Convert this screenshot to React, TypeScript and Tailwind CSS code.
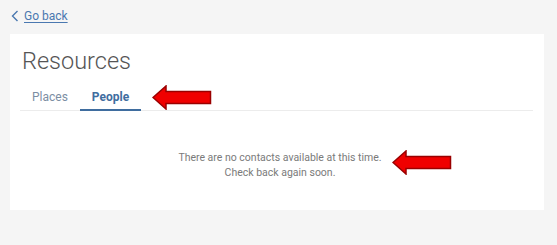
import React from 'react';

function RedArrow({ className }: { className: string }) {
  return (
    <svg className={className} width="60" height="25" viewBox="0 0 60 25">
      <polygon
        points="1,12.5 14,1 14,6.5 58.5,6.5 58.5,18.5 14,18.5 14,24"
        fill="#f00000"
        stroke="#9a0000"
        strokeWidth="1.5"
        strokeLinejoin="miter"
      />
    </svg>
  );
}

export default function App() {
  return (
    <div className="min-h-[245px] w-[557px] bg-[#f5f5f5] font-['Roboto',sans-serif] relative">
      <div className="flex items-center h-[34px] pl-[11px] pb-[2px]">
        <svg width="8" height="12" viewBox="0 0 8 12" className="mr-[5px]">
          <path d="M6.5 1 L1.5 6 L6.5 11" fill="none" stroke="#4a78b0" strokeWidth="1.4" />
        </svg>
        <a href="#" className="text-[12px] text-[#4a78b0] underline underline-offset-2">
          Go back
        </a>
      </div>
      <div className="mx-[10px] w-[534px] h-[176px] bg-white px-[10px] pt-[11px]">
        <h1 className="text-[23.5px] font-light text-[#555] leading-[32px] pl-[2px]">Resources</h1>
        <div className="mt-[12px] border-b border-[#ececec] flex mr-[1px]">
          <div className="px-[12px] pb-[5px] text-[12px] text-[#7c8ea3] leading-[16px]">Places</div>
          <div className="px-[12px] pb-[4px] text-[12px] font-bold text-[#3f6d9f] leading-[16px] border-b-2 border-[#3f6d9f] -mb-px">
            People
          </div>
        </div>
        <div className="mt-[39px] text-center text-[10.5px] leading-[15px] text-[#7a7a7a] pl-[6px]">
          <p>There are no contacts available at this time.</p>
          <p>Check back again soon.</p>
        </div>
      </div>
      <RedArrow className="absolute left-[152px] top-[85px]" />
      <RedArrow className="absolute left-[392px] top-[150px]" />
    </div>
  );
}
